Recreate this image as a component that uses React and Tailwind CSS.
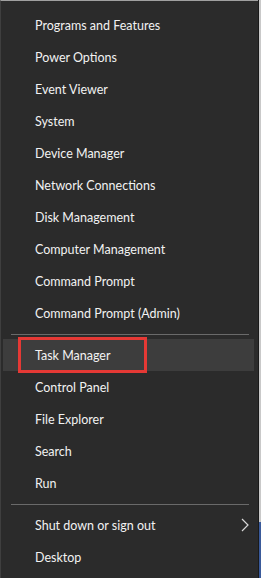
import React from "react";

const group1 = [
  "Programs and Features",
  "Power Options",
  "Event Viewer",
  "System",
  "Device Manager",
  "Network Connections",
  "Disk Management",
  "Computer Management",
  "Command Prompt",
  "Command Prompt (Admin)",
];
const group2 = ["Task Manager", "Control Panel", "File Explorer", "Search", "Run"];

function Row({ label, highlight, chevron }) {
  return (
    <div
      className={
        "relative flex h-[32px] items-center pr-[9px] " +
        (highlight ? "bg-[#3d3d3d] mr-[4px] ml-[2px] pl-[32px]" : "pl-[34px]")
      }
    >
      <span className="pt-[2px] text-[12.5px] text-[#f2f2f2]">{label}</span>
      {chevron && (
        <svg
          className="ml-auto"
          width="8"
          height="14"
          viewBox="0 0 8 14"
          fill="none"
        >
          <path d="M1 1l6 6-6 6" stroke="#d8d8d8" strokeWidth="1.2" />
        </svg>
      )}
      {highlight && (
        <div className="pointer-events-none absolute left-[15px] top-[-2px] h-[36px] w-[129px] border-[3px] border-[#e53935]" />
      )}
    </div>
  );
}

function Sep() {
  return (
    <div className="flex h-[10px] items-center pl-[10px] pr-[9px]">
      <div className="h-px w-full bg-[#6a6a6a]" />
    </div>
  );
}

export default function App() {
  return (
    <div
      className="flex h-[578px] w-[261px] overflow-hidden"
      style={{ fontFamily: 'Lato, "Open Sans", sans-serif' }}
    >
      <div className="flex h-full flex-1 flex-col border-l border-t border-l-[#3f3f3f] border-t-[#a0a0a0] bg-[#2b2b2b] pt-[8px]">
        {group1.map((l) => (
          <Row key={l} label={l} />
        ))}
        <Sep />
        {group2.map((l) => (
          <Row key={l} label={l} highlight={l === "Task Manager"} />
        ))}
        <Sep />
        <Row label="Shut down or sign out" chevron />
        <Row label="Desktop" />
      </div>
      <div className="flex h-full w-[3px] flex-col border-l border-[#1a1a1a]">
        <div className="flex-1 bg-[#c9c9c9]" />
        <div className="h-[56px] bg-[#3a5a9a]" />
      </div>
    </div>
  );
}
